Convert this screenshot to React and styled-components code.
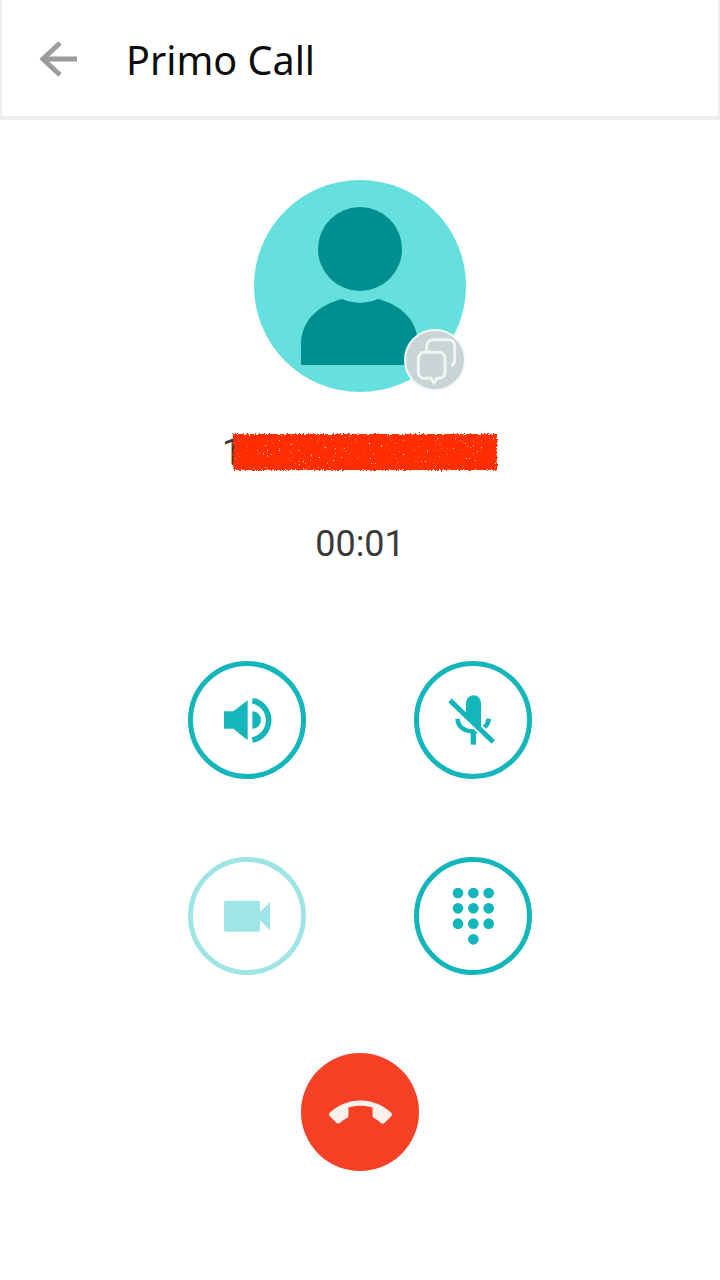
import React from 'react';
import styled, { createGlobalStyle } from 'styled-components';

const GlobalStyle = createGlobalStyle`
  html, body {
    margin: 0;
    padding: 0;
    background: #fff;
  }
`;

const Screen = styled.div`
  width: 720px;
  height: 1280px;
  display: flex;
  flex-direction: column;
  align-items: center;
  background: #fff;
  overflow: hidden;
`;

const Header = styled.header`
  box-sizing: border-box;
  width: 100%;
  height: 120px;
  flex-shrink: 0;
  display: flex;
  align-items: center;
  padding: 0 0 0 36px;
  border-left: 2px solid #eeeeee;
  border-right: 2px solid #eeeeee;
  border-bottom: 4px solid #eeeeee;
`;

const BackIcon = styled.svg`
  width: 40px;
  height: 38px;
  margin: 2px 48px 0 0;
  color: #9c9c9c;
`;

const Title = styled.h1`
  margin: 4px 0 0;
  font-family: "Noto Sans", "Open Sans", sans-serif;
  font-size: 39.5px;
  font-weight: 400;
  color: #0c0c0c;
`;

const Avatar = styled.div`
  position: relative;
  width: 212px;
  height: 212px;
  margin-top: 60px;
  flex-shrink: 0;
  border-radius: 50%;
  background: #66dfdf;
  overflow: visible;
`;

const AvatarFigure = styled.svg`
  display: block;
  width: 212px;
  height: 212px;
`;

const Badge = styled.div`
  position: absolute;
  right: 0;
  bottom: 1px;
  box-sizing: border-box;
  width: 62px;
  height: 62px;
  border-radius: 50%;
  background: #c9d5d4;
  border: 2px solid #f2f8f8;
  display: flex;
  align-items: center;
  justify-content: center;
`;

const BadgeIcon = styled.svg`
  width: 58px;
  height: 58px;
`;

const NameRow = styled.div`
  display: flex;
  align-items: center;
  height: 40px;
  margin-top: 40px;
  margin-left: -1px;
  font-family: "Roboto", sans-serif;
  font-size: 36px;
  color: #3a3a3a;
`;

const Digit = styled.span`
  display: block;
  width: 13px;
  margin-right: -2px;
  line-height: 40px;
`;

const Redaction = styled.svg`
  display: block;
  position: relative;
  width: 272px;
  height: 44px;
  margin: 0 -4px;
`;

const Timer = styled.div`
  margin-top: 51px;
  font-family: "Roboto", sans-serif;
  font-size: 36px;
  line-height: 42px;
  color: #3a3a3a;
`;

const Controls = styled.div`
  display: grid;
  grid-template-columns: 118px 118px;
  column-gap: 108px;
  row-gap: 78px;
  margin-top: 96px;
`;

const Control = styled.button`
  box-sizing: border-box;
  width: 118px;
  height: 118px;
  padding: 0;
  border-radius: 50%;
  background: #fff;
  border: 5px solid ${({ $dim }) => ($dim ? '#a0e5e6' : '#12b6bb')};
  color: ${({ $dim }) => ($dim ? '#a0e5e6' : '#12b6bb')};
  display: flex;
  align-items: center;
  justify-content: center;
`;

const ControlIcon = styled.svg`
  width: 60px;
  height: 60px;
`;

const HangUp = styled.button`
  width: 118px;
  height: 118px;
  margin-top: 78px;
  padding: 0;
  border: none;
  border-radius: 50%;
  background: #f44024;
  color: #fdf1ee;
  display: flex;
  align-items: center;
  justify-content: center;
`;

const HangUpIcon = styled.svg`
  width: 63px;
  height: 63px;
  margin-top: 2px;
`;

const dialDots = [21, 67, 113].flatMap((y) => [45, 91, 137].map((x) => [x, y]));

function SpeakerGlyph() {
  return (
    <ControlIcon viewBox="0 0 180 180" fill="currentColor">
      <path d="M21 64h28l43-33v120l-43-35H21z" />
      <path d="M106 64a26 26 0 0 1 0 52z" />
      <path d="M106 32a60 60 0 0 1 0 118" fill="none" stroke="currentColor" strokeWidth="17" />
    </ControlIcon>
  );
}

function MutedMicGlyph() {
  return (
    <ControlIcon viewBox="0 0 180 180" fill="currentColor">
      <path d="M44 86c0 24 20 38 47 38s43-16 47-38" fill="none" stroke="currentColor" strokeWidth="14" />
      <path d="M83 124h16v40H83z" />
      <path d="M21 31l130 125" stroke="#fff" strokeWidth="27" />
      <path d="M69 40a22 24 0 0 1 45 0v80L69 76z" />
      <path d="M21 31l130 125" stroke="currentColor" strokeWidth="15" />
    </ControlIcon>
  );
}

function VideoGlyph() {
  return (
    <ControlIcon viewBox="0 0 180 180" fill="currentColor">
      <rect x="21" y="44" width="108" height="93" rx="6" />
      <path d="M129 78l30-30v85l-30-30z" />
    </ControlIcon>
  );
}

function DialpadGlyph() {
  return (
    <ControlIcon viewBox="0 0 180 180" fill="currentColor">
      {dialDots.map(([x, y]) => (
        <circle key={`${x}-${y}`} cx={x} cy={y} r="16" />
      ))}
      <circle cx="91" cy="160" r="16" />
    </ControlIcon>
  );
}

function App() {
  return (
    <Screen>
      <GlobalStyle />
      <Header>
        <BackIcon viewBox="0 0 40 38" fill="none" stroke="currentColor" strokeWidth="5">
          <path d="M39 19H5" />
          <path d="M22 3L5 19l17 16" />
        </BackIcon>
        <Title>Primo Call</Title>
      </Header>

      <Avatar>
        <AvatarFigure viewBox="0 0 212 212">
          <circle cx="106" cy="69" r="42" fill="#008f91" />
          <path d="M47 185v-20c0-25 18-40 41-46 12 5 24 5 36 0 23 6 40 21 40 46v20z" fill="#008f91" />
        </AvatarFigure>
        <Badge>
          <BadgeIcon viewBox="0 0 174 174" fill="none" stroke="#f0f5f4" strokeWidth="9">
            <path d="M62 60v-14c0-12 9-20 20-20h44c12 0 20 8 20 20v42c0 8-4 12-10 16" />
            <path d="M56 64h42c12 0 19 8 19 20v38c0 12-7 20-19 20H93l-9 14-9-14H56c-12 0-19-8-19-20V84c0-12 7-20 19-20z" />
          </BadgeIcon>
        </Badge>
      </Avatar>

      <NameRow>
        <Digit>1</Digit>
        <Redaction viewBox="0 0 272 44">
          <filter id="scribble" x="-5%" y="-20%" width="110%" height="140%" colorInterpolationFilters="sRGB">
            <feTurbulence type="fractalNoise" baseFrequency="0.5 0.7" numOctaves="2" seed="4" result="noise" />
            <feDisplacementMap in="SourceGraphic" in2="noise" scale="5" result="rough" />
            <feColorMatrix in="noise" values="0 0 0 0 1  0 0 0 0 1  0 0 0 0 1  9 0 0 0 -6.4" result="specks" />
            <feComposite in="specks" in2="rough" operator="in" result="inside" />
            <feMerge>
              <feMergeNode in="rough" />
              <feMergeNode in="inside" />
            </feMerge>
          </filter>
          <rect x="4" y="4" width="264" height="36" fill="#ff2d00" filter="url(#scribble)" />
        </Redaction>
      </NameRow>

      <Timer>00:01</Timer>

      <Controls>
        <Control aria-label="Speaker"><SpeakerGlyph /></Control>
        <Control aria-label="Mute"><MutedMicGlyph /></Control>
        <Control $dim aria-label="Video"><VideoGlyph /></Control>
        <Control aria-label="Dialpad"><DialpadGlyph /></Control>
      </Controls>

      <HangUp aria-label="End call">
        <HangUpIcon viewBox="0 0 24 24" fill="currentColor">
          <path d="M12 9c-1.6 0-3.15.25-4.6.72v3.1c0 .39-.23.74-.56.9-.98.49-1.87 1.12-2.66 1.85-.18.18-.43.28-.7.28-.28 0-.53-.11-.71-.29L.29 13.08c-.18-.17-.29-.42-.29-.7 0-.28.11-.53.29-.71C3.34 8.78 7.46 7 12 7s8.66 1.78 11.71 4.67c.18.18.29.43.29.71 0 .28-.11.53-.29.71l-2.48 2.48c-.18.18-.43.29-.71.29-.27 0-.52-.11-.7-.28-.79-.74-1.69-1.36-2.67-1.85-.33-.16-.56-.5-.56-.9v-3.1C15.15 9.25 13.6 9 12 9z" />
        </HangUpIcon>
      </HangUp>
    </Screen>
  );
}

export default App;
